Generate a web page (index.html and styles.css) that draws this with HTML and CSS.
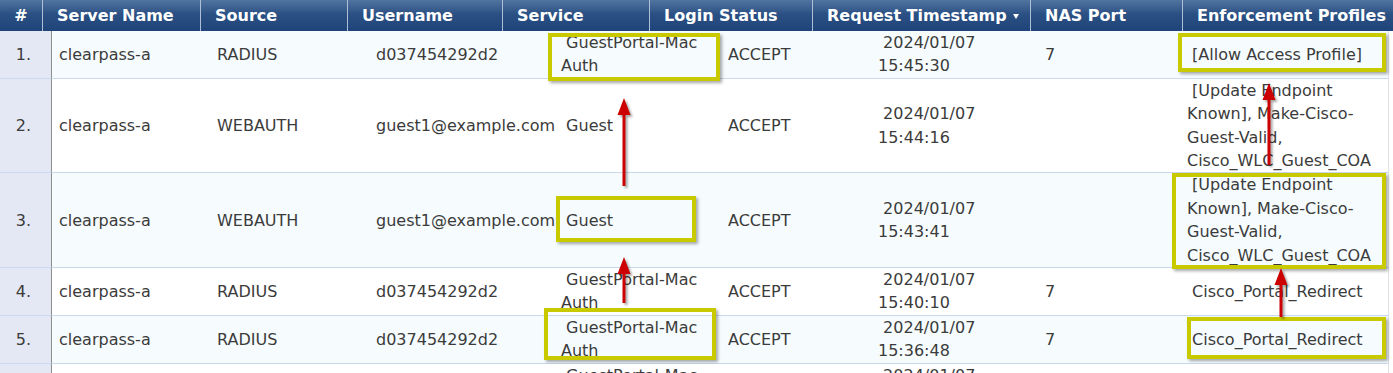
FILE: index.html
```html
<html>
<head>
    <title>Access Tracker</title>
    <link rel="stylesheet" href="styles.css">
</head>
<body>

    <div id="tracker" class="page">
        <table class="gridHead">
            <colgroup>
                <col style="width:42px"><col style="width:158px"><col style="width:147px"><col style="width:155px"><col style="width:147px"><col style="width:163px"><col style="width:218px"><col style="width:152px"><col style="width:211px">
            </colgroup>
            <tr>
                <th class="num">#</th>
                <th>Server Name</th>
                <th>Source</th>
                <th>Username</th>
                <th>Service</th>
                <th>Login Status</th>
                <th>Request Timestamp <span class="sortArrow"></span></th>
                <th>NAS Port</th>
                <th>Enforcement Profiles</th>
            </tr>
        </table>

        <table class="grid">
            <colgroup>
                <col style="width:52px"><col style="width:158px"><col style="width:159px"><col style="width:185px"><col style="width:167px"><col style="width:150px"><col style="width:167px"><col style="width:142px"><col style="width:209px">
            </colgroup>
            <tr class="alt">
                <td class="num">1.</td>
                <td>clearpass-a</td>
                <td>RADIUS</td>
                <td>d037454292d2</td>
                <td>&nbsp;GuestPortal-Mac Auth</td>
                <td>ACCEPT</td>
                <td>&nbsp;2024/01/07 15:45:30</td>
                <td>7</td>
                <td>&nbsp;[Allow Access Profile]</td>
            </tr>
            <tr>
                <td class="num">2.</td>
                <td>clearpass-a</td>
                <td>WEBAUTH</td>
                <td class="user">guest1@example.com</td>
                <td>&nbsp;Guest</td>
                <td>ACCEPT</td>
                <td>&nbsp;2024/01/07 15:44:16</td>
                <td></td>
                <td>&nbsp;[Update Endpoint Known], Make-Cisco-Guest-Valid, Cisco_WLC_Guest_COA</td>
            </tr>
            <tr class="alt">
                <td class="num">3.</td>
                <td>clearpass-a</td>
                <td>WEBAUTH</td>
                <td class="user">guest1@example.com</td>
                <td>&nbsp;Guest</td>
                <td>ACCEPT</td>
                <td>&nbsp;2024/01/07 15:43:41</td>
                <td></td>
                <td>&nbsp;[Update Endpoint Known], Make-Cisco-Guest-Valid, Cisco_WLC_Guest_COA</td>
            </tr>
            <tr>
                <td class="num">4.</td>
                <td>clearpass-a</td>
                <td>RADIUS</td>
                <td>d037454292d2</td>
                <td>&nbsp;GuestPortal-Mac Auth</td>
                <td>ACCEPT</td>
                <td>&nbsp;2024/01/07 15:40:10</td>
                <td>7</td>
                <td>&nbsp;Cisco_Portal_Redirect</td>
            </tr>
            <tr class="alt">
                <td class="num">5.</td>
                <td>clearpass-a</td>
                <td>RADIUS</td>
                <td>d037454292d2</td>
                <td>&nbsp;GuestPortal-Mac Auth</td>
                <td>ACCEPT</td>
                <td>&nbsp;2024/01/07 15:36:48</td>
                <td>7</td>
                <td>&nbsp;Cisco_Portal_Redirect</td>
            </tr>
            <tr>
                <td class="num">6.</td>
                <td>clearpass-a</td>
                <td>RADIUS</td>
                <td>d037454292d2</td>
                <td>&nbsp;GuestPortal-Mac Auth</td>
                <td>ACCEPT</td>
                <td>&nbsp;2024/01/07 15:31:22</td>
                <td>7</td>
                <td>&nbsp;Cisco_Portal_Redirect</td>
            </tr>
        </table>

        <!-- callouts drawn over the table -->
        <div class="mark markOne"></div>
        <div class="mark markTwo"></div>
        <div class="mark markThree"></div>
        <div class="mark markFour"></div>
        <div class="mark markFive"></div>
        <div class="mark markSix"></div>

        <svg class="arrows" width="1393" height="373" viewBox="0 0 1393 373">
            <path d="M622.5 186 V115 H617.5 L624 98 L630.5 115 H625.5 V186 Z"/>
            <path d="M622.5 303 V274 H617.5 L624 257 L630.5 274 H625.5 V303 Z"/>
            <path d="M1267.5 165 V100 H1262.5 L1269 83 L1275.5 100 H1270.5 V165 Z"/>
            <path d="M1279.5 317 V285 H1274.5 L1281 268 L1287.5 285 H1282.5 V317 Z"/>
        </svg>
    </div>

</body>
</html>
```

FILE: styles.css
```css
body {
    margin: 0;
    background-color: white;
    font-family: "DejaVu Sans", sans-serif;
    font-size: 17.4px;
    color: #3b3b3b;
}

.page {
    position: relative;
    width: 1393px;
    height: 373px;
    overflow: hidden;
}

table {
    border-collapse: separate;
    border-spacing: 0;
    table-layout: fixed;
}

.gridHead {
    width: 1393px;
}

.gridHead th {
    height: 31px;
    padding: 0 0 0 14px;
    text-align: left;
    color: white;
    font-weight: bold;
    white-space: nowrap;
    overflow: hidden;
    background: linear-gradient(#52759f, #2b5084 45%, #1e4479);
    border-left: 1px solid #aebfd6;
    box-sizing: border-box;
}

.gridHead th.num {
    text-align: center;
    padding: 0;
    border-left: none;
}

.sortArrow {
    display: inline-block;
    width: 0;
    height: 0;
    margin-left: 1px;
    vertical-align: middle;
    border-left: 3px solid transparent;
    border-right: 3px solid transparent;
    border-top: 5px solid white;
}

.grid {
    width: 1389px;
}

.grid td {
    padding: 0 7px;
    line-height: 23.4px;
    vertical-align: middle;
    border-bottom: 1px solid #cad9ee;
    box-sizing: border-box;
}

.grid td:last-child {
    border-right: 1px solid #dfe3e8;
}

.grid tr.alt {
    background-color: #f6fcfe;
}

.grid td.num {
    text-align: right;
    padding: 0 20px 0 0;
    background-color: #e3e8f4;
    border-right: 1px solid #8e8e8e;
}

.grid td.user {
    white-space: nowrap;
}

.mark {
    position: absolute;
    box-sizing: border-box;
    border: 4px solid #c9c900;
    box-shadow: 2px 2px 3px rgba(0, 0, 0, 0.35);
}

.markOne {
    left: 548px;
    top: 33px;
    width: 172px;
    height: 48px;
}

.markTwo {
    left: 1178px;
    top: 33px;
    width: 208px;
    height: 39px;
}

.markThree {
    left: 556px;
    top: 196px;
    width: 140px;
    height: 46px;
}

.markFour {
    left: 1172px;
    top: 173px;
    width: 214px;
    height: 96px;
}

.markFive {
    left: 544px;
    top: 308px;
    width: 172px;
    height: 52px;
}

.markSix {
    left: 1187px;
    top: 317px;
    width: 199px;
    height: 42px;
}

.arrows {
    position: absolute;
    left: 0;
    top: 0;
    pointer-events: none;
}

.arrows path {
    fill: #cc0000;
    filter: drop-shadow(2px 2px 1px rgba(0, 0, 0, 0.35));
}
```
